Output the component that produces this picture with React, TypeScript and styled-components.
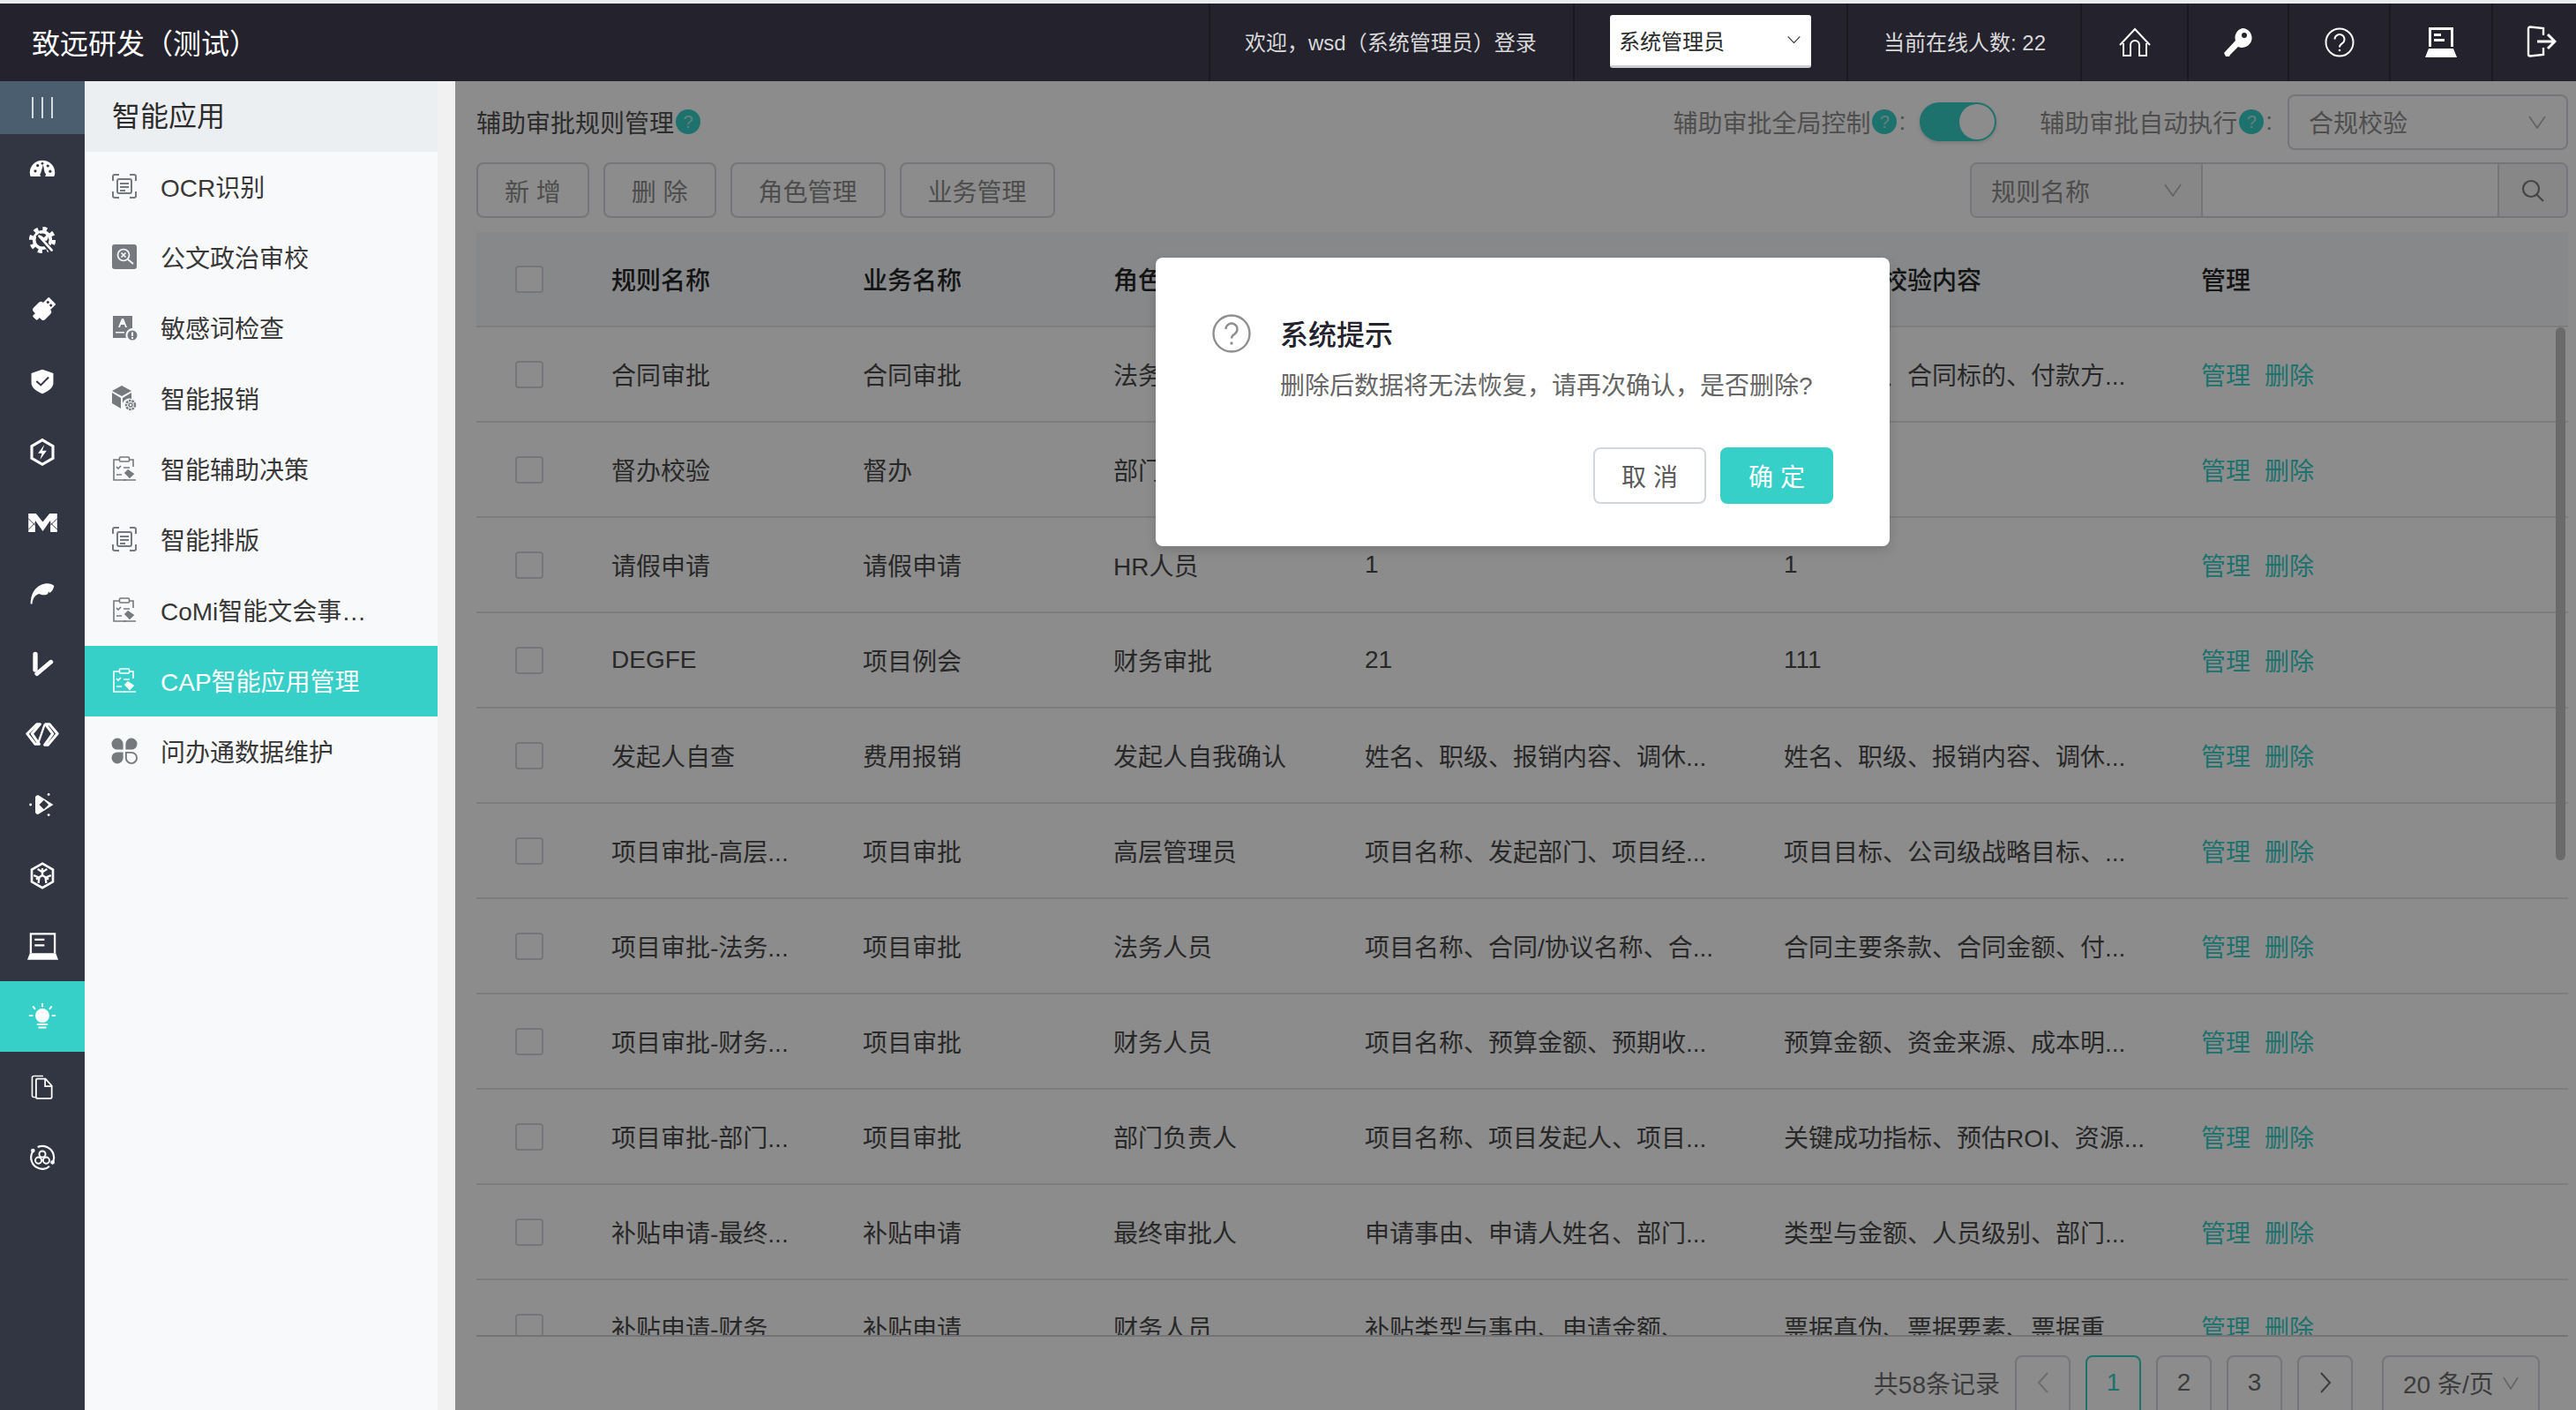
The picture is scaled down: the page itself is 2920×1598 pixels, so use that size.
import React from "react";
import styled, { createGlobalStyle } from "styled-components";

const GlobalStyle = createGlobalStyle`
    html, body {
        margin: 0;
        padding: 0;
        background: #fff;
    }
    * {
        box-sizing: border-box;
    }
    body {
        font-family: "Liberation Sans", "Noto Sans CJK SC", sans-serif;
    }
`;

const Page = styled.div`
    display: flex;
    flex-direction: column;
    width: 2920px;
    height: 1598px;
    overflow: hidden;
    background: #e9ecee;
    padding-top: 4px;
`;

const Header = styled.header`
    display: flex;
    flex: 0 0 88px;
    align-items: stretch;
    background: #23222d;
    color: #d8d8d8;
    font-size: 24px;
`;

const Logo = styled.div`
    flex: 1;
    display: flex;
    align-items: center;
    padding: 0 0 3px 36px;
    color: #fff;
    font-size: 32px;
`;

const HeaderCell = styled.div<{ $width: number; $pad?: number }>`
    display: flex;
    align-items: center;
    justify-content: ${(p) => (p.$pad !== undefined ? "flex-start" : "center")};
    width: ${(p) => p.$width}px;
    padding-left: ${(p) => p.$pad ?? 0}px;
    padding-bottom: ${(p) => (p.$pad !== undefined ? 3 : 0)}px;
    border-left: 2px solid #191921;
`;

const RoleSelect = styled.div`
    display: flex;
    align-items: center;
    justify-content: space-between;
    width: 228px;
    height: 60px;
    padding: 0 12px 0 10px;
    background: #fff;
    border-bottom: 3px solid #c9d0d2;
    border-radius: 3px;
    color: #2b2b2b;
`;

const Body = styled.div`
    flex: 1;
    display: flex;
    min-height: 0;
`;

const Sidebar = styled.nav`
    flex: 0 0 96px;
    display: flex;
    flex-direction: column;
    background: #323643;
`;

const CollapseCell = styled.div`
    display: flex;
    align-items: center;
    justify-content: center;
    gap: 9px;
    height: 60px;
    background: #4b5e6f;
`;

const CollapseBar = styled.span`
    width: 2px;
    height: 24px;
    background: #d5dade;
`;

const SideCell = styled.div<{ $active?: boolean }>`
    display: flex;
    align-items: center;
    justify-content: center;
    height: 80px;
    color: #fff;
    background: ${(p) => (p.$active ? "#36d0c9" : "transparent")};
`;

const SubMenu = styled.div`
    flex: 0 0 400px;
    background: #f8f9fb;
`;

const SubMenuTitle = styled.div`
    display: flex;
    align-items: center;
    height: 80px;
    padding: 0 0 6px 31px;
    background: #eceff1;
    color: #2c2c2c;
    font-size: 32px;
`;

const SubMenuItem = styled.div<{ $active?: boolean }>`
    display: flex;
    align-items: center;
    gap: 26px;
    height: 80px;
    padding: 0 0 3px 30px;
    font-size: 28px;
    white-space: nowrap;
    color: ${(p) => (p.$active ? "#fff" : "#383838")};
    background: ${(p) => (p.$active ? "#36d0c9" : "transparent")};
`;

const SubIconBox = styled.span<{ $active?: boolean }>`
    display: flex;
    width: 30px;
    justify-content: center;
    color: ${(p) => (p.$active ? "#fff" : "#767a7e")};
`;

const Gutter = styled.div`
    flex: 0 0 20px;
    background: #f1f1f1;
`;

const Main = styled.main`
    position: relative;
    flex: 1;
    display: flex;
    flex-direction: column;
    min-width: 0;
    overflow: hidden;
    padding: 0 9px 0 24px;
    background: #fff;
`;

const TitleRow = styled.div`
    display: flex;
    flex: none;
    align-items: center;
    justify-content: space-between;
    height: 92px;
`;

const Title = styled.div`
    display: flex;
    align-items: center;
    gap: 2px;
    color: #505050;
    font-size: 28px;
`;

const Badge = styled.span`
    display: inline-flex;
    align-items: center;
    justify-content: center;
    width: 28px;
    height: 28px;
    border-radius: 50%;
    background: #36d0c9;
    color: #b9e9e6;
    font-size: 20px;
`;

const Controls = styled.div`
    display: flex;
    align-items: center;
`;

const ControlLabel = styled.div<{ $gap?: number }>`
    display: flex;
    align-items: center;
    gap: 2px;
    margin-left: ${(p) => p.$gap ?? 0}px;
    color: #8f8f8f;
    font-size: 28px;
`;

const Switch = styled.div`
    display: flex;
    justify-content: flex-end;
    align-items: center;
    width: 87px;
    height: 44px;
    margin-left: 16px;
    padding-right: 2px;
    border-radius: 22px;
    background: #36d0c9;
    box-shadow: 0 2px 4px rgba(0, 0, 0, 0.15);
`;

const SwitchKnob = styled.span`
    width: 40px;
    height: 40px;
    border-radius: 50%;
    background: #fff;
`;

const FieldSelect = styled.div`
    display: flex;
    align-items: center;
    justify-content: space-between;
    width: 318px;
    height: 63px;
    margin-left: 17px;
    padding: 0 23px 0 22px;
    border: 2px solid #d3d7dc;
    border-radius: 8px;
    color: #8f8f8f;
    font-size: 28px;
`;

const ToolRow = styled.div`
    display: flex;
    flex: none;
    align-items: center;
    justify-content: space-between;
    height: 63px;
    margin-bottom: 16px;
`;

const ToolButtons = styled.div`
    display: flex;
    gap: 16px;
`;

const ToolButton = styled.div`
    display: flex;
    align-items: center;
    justify-content: center;
    height: 63px;
    padding: 0 30px;
    min-width: 127px;
    border: 2px solid #d3d7dc;
    border-radius: 8px;
    color: #8c8c8c;
    font-size: 28px;
    white-space: nowrap;
`;

const SearchGroup = styled.div`
    display: flex;
    width: 678px;
    height: 63px;
    border: 2px solid #d3d7dc;
    border-radius: 8px;
    overflow: hidden;
    color: #8c8c8c;
    font-size: 28px;
`;

const SearchField = styled.div`
    flex: 0 0 262px;
    display: flex;
    align-items: center;
    justify-content: space-between;
    padding: 0 22px 0 22px;
    background: #f6f6f6;
    border-right: 2px solid #d3d7dc;
`;

const SearchInput = styled.div`
    flex: 1;
`;

const SearchButton = styled.div`
    flex: 0 0 78px;
    display: flex;
    align-items: center;
    justify-content: center;
    background: #f6f6f6;
    border-left: 2px solid #d3d7dc;
`;

const TableWrap = styled.div`
    position: relative;
    flex: none;
    height: 1252px;
    overflow: hidden;
    border-bottom: 2px solid #d0d3d7;
`;

const Row = styled.div<{ $head?: boolean }>`
    display: grid;
    grid-template-columns: 153px 285px 284px 285px 475px 473px 1fr;
    align-items: center;
    height: 108px;
    border-bottom: 2px solid #e2e4e8;
    font-size: 28px;
    font-weight: ${(p) => (p.$head ? 500 : 400)};
    color: ${(p) => (p.$head ? "#262626" : "#4a4a4a")};
    background: ${(p) => (p.$head ? "#f5f7fa" : "transparent")};
`;

const Cell = styled.div`
    white-space: nowrap;
    overflow: hidden;
`;

const CheckCell = styled.div`
    padding-left: 44px;
`;

const CheckBox = styled.span`
    display: block;
    width: 32px;
    height: 31px;
    border: 2px solid #d3d7dc;
    border-radius: 4px;
    background: #fff;
`;

const ActionCell = styled.div`
    display: flex;
    gap: 16px;
    color: #36d0c9;
    white-space: nowrap;
`;

const ScrollThumb = styled.div`
    position: absolute;
    top: 108px;
    right: 3px;
    width: 11px;
    height: 604px;
    border-radius: 6px;
    background: #c2c2c2;
`;

const Footer = styled.div`
    display: flex;
    flex: none;
    align-items: flex-start;
    justify-content: flex-end;
    gap: 17px;
    padding: 21px 32px 0 0;
    color: #6e6e6e;
    font-size: 28px;
`;

const Total = styled.div`
    display: flex;
    align-items: center;
    height: 62px;
`;

const PageBox = styled.div<{ $active?: boolean; $muted?: boolean }>`
    display: flex;
    align-items: center;
    justify-content: center;
    flex: 0 0 63px;
    height: 70px;
    padding-bottom: 8px;
    border: 2px solid ${(p) => (p.$active ? "#36d0c9" : "#d3d7dc")};
    border-radius: 8px;
    color: ${(p) => (p.$active ? "#36d0c9" : p.$muted ? "#c4c8cc" : "#6e6e6e")};
`;

const SizeBox = styled.div`
    display: flex;
    align-items: center;
    justify-content: space-between;
    width: 179px;
    height: 70px;
    margin-left: 16px;
    padding: 0 22px 8px 22px;
    border: 2px solid #d3d7dc;
    border-radius: 8px;
    white-space: nowrap;
`;

const Overlay = styled.div`
    position: absolute;
    inset: 0;
    background: rgba(0, 0, 0, 0.45);
`;

const Modal = styled.div`
    position: absolute;
    left: 794px;
    top: 200px;
    width: 832px;
    height: 327px;
    padding: 64px 64px 0 64px;
    border-radius: 8px;
    background: #fff;
    box-shadow: 0 4px 12px rgba(0, 0, 0, 0.15);
`;

const ModalHead = styled.div`
    display: flex;
    align-items: center;
    gap: 33px;
    height: 44px;
    color: #23222d;
    font-size: 32px;
    font-weight: 500;
`;

const ModalTitle = styled.span`
    margin-bottom: 3px;
`;

const ModalIcon = styled.span`
    display: flex;
    color: #8f8f8f;
`;

const ModalText = styled.div`
    margin: 18px 0 0 77px;
    height: 40px;
    line-height: 40px;
    color: #666;
    font-size: 28px;
    white-space: nowrap;
`;

const ModalActions = styled.div`
    display: flex;
    justify-content: flex-end;
    gap: 16px;
    margin-top: 49px;
`;

const ModalButton = styled.div<{ $primary?: boolean }>`
    display: flex;
    align-items: center;
    justify-content: center;
    width: 128px;
    height: 64px;
    border-radius: 8px;
    font-size: 28px;
    white-space: nowrap;
    color: ${(p) => (p.$primary ? "#fff" : "#5a5a5a")};
    background: ${(p) => (p.$primary ? "#36d0c9" : "#fff")};
    border: ${(p) => (p.$primary ? "none" : "2px solid #d3d7dc")};
`;

function Chevron({ color = "#b4b8bc", width = 20, height = 15 }: { color?: string; width?: number; height?: number }) {
    return (
        <svg width={width} height={height} viewBox="0 0 20 15" fill="none" stroke={color} strokeWidth="1.800" preserveAspectRatio="none">
            <path d="M1 1l9 13 9-13" />
        </svg>
    );
}

function Side({ children }: { children: React.ReactNode }) {
    return (
        <svg width="32" height="32" viewBox="0 0 36 36" fill="currentColor">
            {children}
        </svg>
    );
}

const sideIcons: React.ReactNode[] = [
    <Side>
        <path d="M3 27c-.6-1.300-1-3-1-5C2 13 9.200 6.500 18 6.500S34 13 34 22c0 2-.4 3.700-1 5z" />
        <g fill="#323643">
            <circle cx="9" cy="20" r="1.800" />
            <circle cx="12" cy="13" r="1.800" />
            <circle cx="18" cy="10.500" r="1.500" />
            <circle cx="25" cy="13.500" r="1.800" />
            <circle cx="28" cy="20.500" r="1.800" />
            <path d="M19 12l2 10a3.500 3.500 0 1 1-5 .5z" />
        </g>
    </Side>,
    <Side>
        <circle cx="18" cy="18" r="10.500" fill="none" stroke="currentColor" strokeWidth="4" />
        <circle cx="18" cy="18" r="14.500" fill="none" stroke="currentColor" strokeWidth="5" strokeDasharray="5.500 5.890" />
        <path d="M12 11l17 20" stroke="#323643" strokeWidth="6.500" />
        <path d="M14 13l16 18" stroke="currentColor" strokeWidth="3" strokeLinecap="round" />
        <path d="M21 7a7 7 0 0 1 2 12l-5-1-4-5 2-1 4 3 3-3-3-4z" />
    </Side>,
    <Side>
        <g transform="rotate(45 18 18)">
            <rect x="11.500" y="0" width="13" height="11" rx="1" />
            <rect x="7.500" y="10" width="21" height="17" rx="4" />
            <rect x="14" y="26" width="8" height="6" rx="1.500" />
            <rect x="14" y="4" width="3" height="3" fill="#323643" />
            <rect x="19.500" y="4" width="3" height="3" fill="#323643" />
        </g>
    </Side>,
    <Side>
        <path d="M18 3l14 5v12c0 7-7 11-14 14C11 31 4 27 4 20V8z" />
        <path d="M10.500 18l5.500 5 10-10" fill="none" stroke="#323643" strokeWidth="2.200" />
    </Side>,
    <Side>
        <path d="M18 3l13.500 7.800v15.400L18 34 4.500 26.200V10.800z" fill="none" stroke="currentColor" strokeWidth="3.500" />
        <path d="M20.500 9l-8 11h5l-2.500 8 8.500-11.500h-5.500z" />
    </Side>,
    <svg width="33" height="23" viewBox="0 0 34 24" fill="currentColor">
        <path d="M0 1h9l8 10 8-10h9v22h-8V9l-9 13L8 9v14H0z" />
        <path d="M0 7l8 8M0 20l8-8M34 7l-8 8M34 20l-8-8" stroke="#323643" strokeWidth="1" fill="none" />
    </svg>,
    <Side>
        <path d="M3 32c0-9 3-19 13-24 6-3 13-3 17 1-1 4-2 7-6 9l-1-2-1 3c-3 2-6 2-9 1l-2-1c-4 1-8 4-9 13z" />
    </Side>,
    <Side>
        <path d="M9 6v20" stroke="currentColor" strokeWidth="6" strokeLinecap="round" />
        <path d="M11 31l18-15" stroke="currentColor" strokeWidth="5.500" strokeLinecap="round" />
    </Side>,
    <svg width="38" height="27" viewBox="0 0 42 30" fill="none" stroke="currentColor" strokeWidth="3.400" strokeLinejoin="round">
        <path d="M14 2L2 14l10 13h5L8 14 18 2z" />
        <path d="M28 28l12-14L30 2h-5l9 12-10 14z" />
        <path d="M24 2L15 28" strokeWidth="2.600" />
    </svg>,
    <Side>
        <path d="M13 6l19 12-19 12a3 3 0 0 1-4-3V9a3 3 0 0 1 4-3z" />
        <path d="M14 18l6-6 6 6-6 6z" fill="#323643" />
        <circle cx="3" cy="18" r="1.600" />
        <circle cx="26" cy="5" r="1.600" />
        <circle cx="26" cy="31" r="1.600" />
    </Side>,
    <Side>
        <path d="M18 3l13.500 7.800v15.400L18 34 4.500 26.200V10.800z" fill="none" stroke="currentColor" strokeWidth="3" />
        <path d="M18 18V9M18 18l-8 5M18 18l8 5M12 10l6 4 6-4M7 18l7 3-1 7M29 18l-7 3 1 7" fill="none" stroke="currentColor" strokeWidth="2.600" />
    </Side>,
    <svg width="35" height="32" viewBox="0 0 38 34" fill="currentColor">
        <path d="M3 26V1h32v25h-2.500V3.500h-27V26z" />
        <path d="M9 8h12v2.500H9zM9 15h12v2.500H9z" />
        <path d="M3 26h32l3 8H0z" />
    </svg>,
    <Side>
        <circle cx="18" cy="17" r="9" />
        <path d="M18 1v5M6 5l3 4M30 5l-3 4M1 17h5M30 17h5M11 28h14M13 32h10" stroke="currentColor" strokeWidth="2.200" fill="none" />
    </Side>,
    <Side>
        <path d="M11 31H7a2 2 0 0 1-2-2V6a2 2 0 0 1 2-2h12" fill="none" stroke="currentColor" strokeWidth="1.800" />
        <path d="M10 9a1.500 1.500 0 0 1 1.500-1.500H22l8 9v14.500a1.500 1.500 0 0 1-1.500 1.500h-17A1.500 1.500 0 0 1 10 31z" fill="#323643" stroke="currentColor" strokeWidth="2" />
        <path d="M21.500 8v9H30" fill="none" stroke="currentColor" strokeWidth="2" />
    </Side>,
    <Side>
        <path d="M6 10a14.500 14.500 0 0 0 4 20c6 4 13 3 17-1M12 4.500C20 1 29 5 32 13c1 3 1 7 0 10" fill="none" stroke="currentColor" strokeWidth="2.400" />
        <circle cx="6" cy="9" r="2.600" />
        <circle cx="31" cy="24" r="2.600" />
        <g fill="none" stroke="currentColor" strokeWidth="2.200">
            <circle cx="18" cy="13.500" r="4" />
            <circle cx="13" cy="21.500" r="4" />
            <circle cx="23" cy="21.500" r="4" />
        </g>
    </Side>,
];

function Sub({ children, bg }: { children: React.ReactNode; bg?: boolean }) {
    return (
        <svg width="30" height="30" viewBox="0 0 30 30" fill={bg ? "currentColor" : "none"} stroke={bg ? "none" : "currentColor"} strokeWidth="2">
            {children}
        </svg>
    );
}

const scanIcon = (
    <Sub>
        <path d="M2 9V4a2 2 0 0 1 2-2h5M21 2h5a2 2 0 0 1 2 2v5M28 21v5a2 2 0 0 1-2 2h-5M9 28H4a2 2 0 0 1-2-2v-5" />
        <rect x="7" y="7" width="16" height="16" rx="2" />
        <path d="M10 12h10M10 16h10M10 20h6" />
    </Sub>
);

const clipboardIcon = (
    <Sub>
        <path d="M25 13V5h-5M10 5H3v23h14" strokeWidth="1.600" />
        <rect x="9.500" y="2" width="11" height="5" rx="1" strokeWidth="1.600" />
        <path d="M6 13l2 2 3-3M14 14h7M6 22h6" strokeWidth="1.600" />
        <path d="M19 17l6 4-4 4-5-5zM14 28h14" fill="currentColor" strokeWidth="1.600" />
    </Sub>
);

const menuItems: { label: string; icon: React.ReactNode; active?: boolean }[] = [
    { label: "OCR识别", icon: scanIcon },
    {
        label: "公文政治审校",
        icon: (
            <Sub bg>
                <rect x="1" y="1" width="28" height="28" rx="3" />
                <g fill="none" stroke="#f8f9fb" strokeWidth="1.700">
                    <circle cx="14" cy="13" r="6.500" />
                    <path d="M19 18l6 5M11.500 10.500l5 5M16.500 10.500l-5 5" />
                </g>
            </Sub>
        ),
    },
    {
        label: "敏感词检查",
        icon: (
            <Sub bg>
                <path d="M2 2h22v14a8 8 0 0 0-7 11H2z" />
                <circle cx="24" cy="24" r="5.500" />
                <path d="M23 20.500h2v4.500h-2zM23 26h2v2h-2z" fill="#f8f9fb" />
                <path d="M8 15l4-10h2l4 10h-2l-1-3h-4l-1 3zM5 20h10v1.500H5z" fill="#f8f9fb" />
            </Sub>
        ),
    },
    {
        label: "智能报销",
        icon: (
            <Sub bg>
                <path d="M12 1l11 6-11 6L1 7z" />
                <path d="M1 9l10 6v12L1 21zM23 9v7a8 8 0 0 0-10 5V15z" />
                <circle cx="22" cy="23" r="5" fill="none" stroke="currentColor" strokeWidth="2.500" strokeDasharray="2.500 1" />
                <circle cx="22" cy="23" r="2" fill="none" stroke="currentColor" strokeWidth="1.400" />
            </Sub>
        ),
    },
    { label: "智能辅助决策", icon: clipboardIcon },
    { label: "智能排版", icon: scanIcon },
    { label: "CoMi智能文会事…", icon: clipboardIcon },
    { label: "CAP智能应用管理", icon: clipboardIcon, active: true },
    {
        label: "问办通数据维护",
        icon: (
            <svg width="32" height="32" viewBox="0 0 32 32" fill="currentColor">
                <path d="M14.500 14.500H8a7 7 0 1 1 6.500-6.500zM17.500 14.500V8a7 7 0 1 1 6.500 6.500zM14.500 17.500V24a7 7 0 1 1-6.500-6.500z" />
                <path d="M18 18h6.500a6.500 6.500 0 1 1-6.500 6.500z" fill="none" stroke="currentColor" strokeWidth="2" />
            </svg>
        ),
    },
];

type RuleRow = [string, string, string, string, string];

// the fourth column of the first rows sits behind the dialog
const rows: RuleRow[] = [
    ["合同审批", "合同审批", "法务人员", "", "合同主体、合同标的、付款方..."],
    ["督办校验", "督办", "部门负责人", "", ""],
    ["请假申请", "请假申请", "HR人员", "1", "1"],
    ["DEGFE", "项目例会", "财务审批", "21", "111"],
    ["发起人自查", "费用报销", "发起人自我确认", "姓名、职级、报销内容、调休...", "姓名、职级、报销内容、调休..."],
    ["项目审批-高层...", "项目审批", "高层管理员", "项目名称、发起部门、项目经...", "项目目标、公司级战略目标、..."],
    ["项目审批-法务...", "项目审批", "法务人员", "项目名称、合同/协议名称、合...", "合同主要条款、合同金额、付..."],
    ["项目审批-财务...", "项目审批", "财务人员", "项目名称、预算金额、预期收...", "预算金额、资金来源、成本明..."],
    ["项目审批-部门...", "项目审批", "部门负责人", "项目名称、项目发起人、项目...", "关键成功指标、预估ROI、资源..."],
    ["补贴申请-最终...", "补贴申请", "最终审批人", "申请事由、申请人姓名、部门...", "类型与金额、人员级别、部门..."],
    ["补贴申请-财务...", "补贴申请", "财务人员", "补贴类型与事由、申请金额、...", "票据真伪、票据要素、票据重..."],
];

export default function App(): JSX.Element {
    return (
        <Page>
            <GlobalStyle />
            <Header>
                <Logo>致远研发（测试）</Logo>
                <HeaderCell $width={413} $pad={39}>欢迎，wsd（系统管理员）登录</HeaderCell>
                <HeaderCell $width={310} $pad={40}>
                    <RoleSelect>
                        系统管理员
                        <Chevron color="#333" width={15} height={8} />
                    </RoleSelect>
                </HeaderCell>
                <HeaderCell $width={265} $pad={40}>当前在线人数: 22</HeaderCell>
                <HeaderCell $width={121}>
                    <svg width="36" height="34" viewBox="0 0 36 34" fill="none" stroke="#fff" strokeWidth="2">
                        <path d="M1 20L18 2l17 18" />
                        <path d="M5 18v14h8V20a5 5 0 0 1 10 0v12h8V18" />
                    </svg>
                </HeaderCell>
                <HeaderCell $width={114}>
                    <svg width="34" height="34" viewBox="0 0 34 34" fill="#fff">
                        <path d="M22 1a11 11 0 1 1-5 21L8 31l-1 2H3l-2-4 13-14A11 11 0 0 1 22 1z" />
                        <circle cx="24" cy="9" r="3" fill="#23222d" />
                    </svg>
                </HeaderCell>
                <HeaderCell $width={115}>
                    <svg width="34" height="34" viewBox="0 0 34 34" fill="none" stroke="#fff" strokeWidth="2">
                        <circle cx="17" cy="17" r="15.500" />
                        <path d="M11.500 13.500a5.500 5.500 0 1 1 8.500 4.600c-2 1.300-3 2-3 4.400" />
                        <circle cx="17" cy="26" r="1.300" fill="#fff" stroke="none" />
                    </svg>
                </HeaderCell>
                <HeaderCell $width={116}>
                    <svg width="36" height="34" viewBox="0 0 36 34" fill="#fff">
                        <path d="M4 0h28v22h-3V3H7v19H4z" />
                        <path d="M10 7h8v3h-8zM10 13h12v3H10z" />
                        <path d="M4 24h28l4 10H0z" />
                    </svg>
                </HeaderCell>
                <HeaderCell $width={96} $pad={38}>
                    <svg width="34" height="36" viewBox="0 0 34 36" fill="none" stroke="#fff" strokeWidth="2.400">
                        <path d="M19 11V3L4 1.500a2 2 0 0 0-2 2v29a2 2 0 0 0 2 2L19 33v-8" />
                        <path d="M12 18h19M24 10l8 8-8 8" strokeWidth="3" />
                    </svg>
                </HeaderCell>
            </Header>
            <Body>
                <Sidebar>
                    <CollapseCell>
                        <CollapseBar />
                        <CollapseBar />
                        <CollapseBar />
                    </CollapseCell>
                    {sideIcons.map((icon, i) => (
                        <SideCell key={i} $active={i === 12}>{icon}</SideCell>
                    ))}
                </Sidebar>
                <SubMenu>
                    <SubMenuTitle>智能应用</SubMenuTitle>
                    {menuItems.map((item) => (
                        <SubMenuItem key={item.label} $active={item.active}>
                            <SubIconBox $active={item.active}>{item.icon}</SubIconBox>
                            {item.label}
                        </SubMenuItem>
                    ))}
                </SubMenu>
                <Gutter />
                <Main>
                    <TitleRow>
                        <Title>辅助审批规则管理<Badge>?</Badge></Title>
                        <Controls>
                            <ControlLabel>辅助审批全局控制<Badge>?</Badge>:</ControlLabel>
                            <Switch><SwitchKnob /></Switch>
                            <ControlLabel $gap={49}>辅助审批自动执行<Badge>?</Badge>:</ControlLabel>
                            <FieldSelect>合规校验<Chevron /></FieldSelect>
                        </Controls>
                    </TitleRow>
                    <ToolRow>
                        <ToolButtons>
                            <ToolButton>新 增</ToolButton>
                            <ToolButton>删 除</ToolButton>
                            <ToolButton>角色管理</ToolButton>
                            <ToolButton>业务管理</ToolButton>
                        </ToolButtons>
                        <SearchGroup>
                            <SearchField>规则名称<Chevron /></SearchField>
                            <SearchInput />
                            <SearchButton>
                                <svg width="26" height="26" viewBox="0 0 26 26" fill="none" stroke="#7d7d7d" strokeWidth="2.200">
                                    <circle cx="11" cy="11" r="9" />
                                    <path d="M17.500 17.500L25 25" />
                                </svg>
                            </SearchButton>
                        </SearchGroup>
                    </ToolRow>
                    <TableWrap>
                        <Row $head>
                            <CheckCell><CheckBox /></CheckCell>
                            <Cell>规则名称</Cell>
                            <Cell>业务名称</Cell>
                            <Cell>角色名称</Cell>
                            <Cell>审批提取内容</Cell>
                            <Cell>审批规则校验内容</Cell>
                            <Cell>管理</Cell>
                        </Row>
                        {rows.map((row) => (
                            <Row key={row[0]}>
                                <CheckCell><CheckBox /></CheckCell>
                                {row.map((text, i) => (
                                    <Cell key={i}>{text}</Cell>
                                ))}
                                <ActionCell>
                                    <span>管理</span>
                                    <span>删除</span>
                                </ActionCell>
                            </Row>
                        ))}
                        <ScrollThumb />
                    </TableWrap>
                    <Footer>
                        <Total>共58条记录</Total>
                        <PageBox $muted>
                            <svg width="14" height="26" viewBox="0 0 14 26" fill="none" stroke="currentColor" strokeWidth="2">
                                <path d="M12 2L2 13l10 11" />
                            </svg>
                        </PageBox>
                        <PageBox $active>1</PageBox>
                        <PageBox>2</PageBox>
                        <PageBox>3</PageBox>
                        <PageBox>
                            <svg width="14" height="26" viewBox="0 0 14 26" fill="none" stroke="currentColor" strokeWidth="2">
                                <path d="M2 2l10 11L2 24" />
                            </svg>
                        </PageBox>
                        <SizeBox>20 条/页<Chevron width={18} /></SizeBox>
                    </Footer>
                    <Overlay>
                        <Modal>
                            <ModalHead>
                                <ModalIcon>
                                    <svg width="44" height="44" viewBox="0 0 44 44" fill="none" stroke="currentColor" strokeWidth="2.400">
                                        <circle cx="22" cy="22" r="20.500" />
                                        <path d="M15.500 17a6.500 6.500 0 1 1 10 5.500c-2.300 1.500-3.500 2.500-3.500 5" />
                                        <circle cx="22" cy="33" r="1.700" fill="currentColor" stroke="none" />
                                    </svg>
                                </ModalIcon>
                                <ModalTitle>系统提示</ModalTitle>
                            </ModalHead>
                            <ModalText>删除后数据将无法恢复，请再次确认，是否删除?</ModalText>
                            <ModalActions>
                                <ModalButton>取 消</ModalButton>
                                <ModalButton $primary>确 定</ModalButton>
                            </ModalActions>
                        </Modal>
                    </Overlay>
                </Main>
            </Body>
        </Page>
    );
}
